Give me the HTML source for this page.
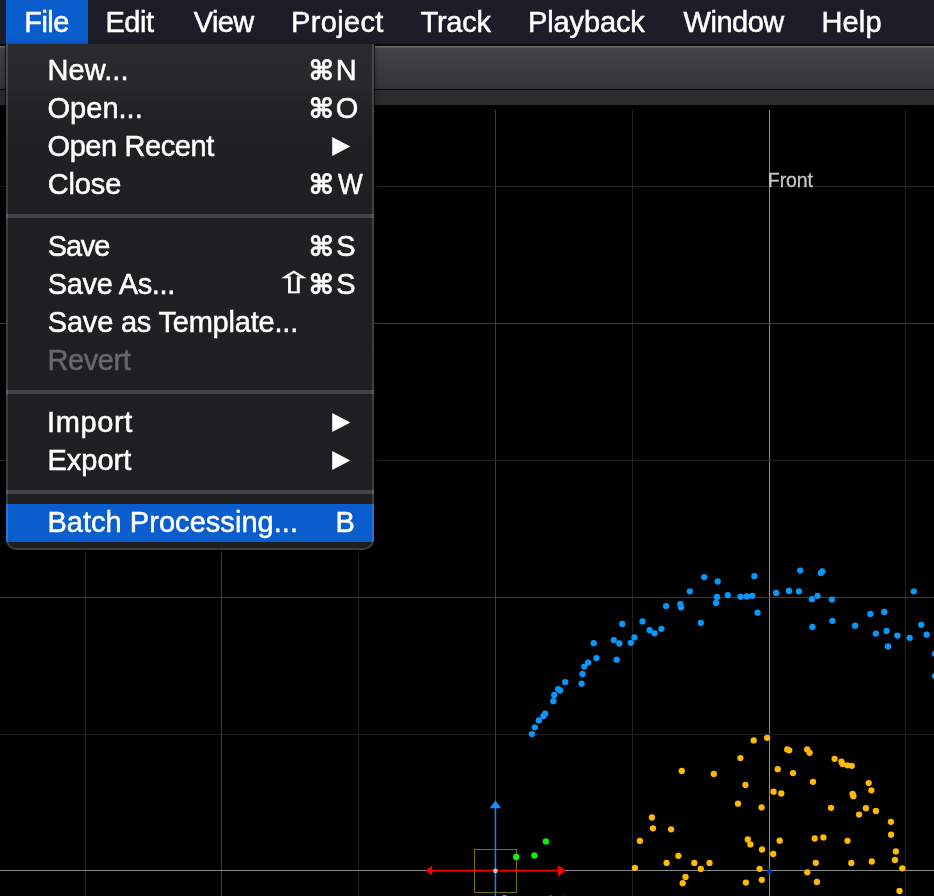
<!DOCTYPE html>
<html lang="en"><head><meta charset="utf-8"><title>File menu</title>
<style>
html,body{margin:0;padding:0;background:#000;}
body{width:934px;height:896px;position:relative;overflow:hidden;font-family:"Liberation Sans",sans-serif;}
.abs{position:absolute;}
#menubar{left:0;top:0;width:934px;height:44px;background:#1b1e28;}
#filehl{left:6px;top:0;width:82px;height:44px;background:#0a5dcd;}
.mb{position:absolute;top:0px;line-height:44px;font-size:29px;color:#fff;white-space:nowrap;}
#tb0{left:0;top:44px;width:934px;height:2px;background:#0b0b0d;}
#tb1{left:0;top:46px;width:934px;height:43px;background:linear-gradient(#6c6c6e 0,#5a5a5c 1.5px,#444447 2.5px,#434346 8px,#343436 43px);}
#tb2{left:0;top:89px;width:934px;height:1px;background:#070707;}
#tb3{left:0;top:90px;width:934px;height:15px;background:#2c2c2e;}
#menu{left:6px;top:44px;width:368px;height:506px;border-radius:0 0 10px 10px;overflow:hidden;
 background:linear-gradient(#2b2b2e 0,#29292c 40px,#222224 70px,#1f2022 110px,#1e1f20 100%);box-shadow:0 1px 0 1px rgba(0,0,0,0.55),0 3px 8px 1px rgba(0,0,0,0.3);}
#menuborder{left:0;top:-2px;width:364px;height:504px;border:2px solid rgba(255,255,255,0.14);border-radius:0 0 10px 10px;}
.sep{position:absolute;left:0;width:368px;height:4px;background:#434447;}
.mb,.mi,.sc{-webkit-text-stroke:0.5px currentColor;}
.tl{position:absolute;left:0;top:0;width:100%;height:100%;will-change:transform;}
.mi{position:absolute;line-height:38px;font-size:29px;color:#fff;white-space:nowrap;}
.dis{color:#68686b;}
.sc{position:absolute;line-height:38px;font-size:29px;color:#fff;white-space:nowrap;}
.sym{font-family:"DejaVu Sans",sans-serif;font-weight:bold;transform-origin:50% 50%;}
#hl{left:0;top:460px;width:368px;height:38px;background:#0a5dcd;}
#front{left:769px;top:166px;font-size:19.5px;line-height:28px;color:#c8c8c8;white-space:nowrap;-webkit-text-stroke:0.3px #c8c8c8;}
</style></head><body>
<svg class="abs" style="left:0;top:0" width="934" height="896" viewBox="0 0 934 896" shape-rendering="auto"><rect x="85" y="110" width="1" height="786" fill="#212121"/><rect x="221" y="110" width="1" height="786" fill="#3c3c3c"/><rect x="358" y="110" width="1" height="786" fill="#212121"/><rect x="495" y="110" width="1" height="786" fill="#3c3c3c"/><rect x="632" y="110" width="1" height="786" fill="#212121"/><rect x="769" y="110" width="1" height="786" fill="#8a8a8a"/><rect x="905" y="110" width="1" height="786" fill="#212121"/><rect x="0" y="186" width="934" height="1" fill="#212121"/><rect x="0" y="323" width="934" height="1" fill="#3c3c3c"/><rect x="0" y="460" width="934" height="1" fill="#212121"/><rect x="0" y="597" width="934" height="1" fill="#3c3c3c"/><rect x="0" y="734" width="934" height="1" fill="#212121"/><rect x="0" y="870" width="934" height="1" fill="#8a8a8a"/><rect x="474.5" y="849.5" width="42" height="43" fill="none" stroke="#7a6e00" stroke-width="1"/><rect x="494.7" y="806" width="1.5" height="90" fill="#1b84f5"/><polygon points="495.4,800.4 501.2,808.2 489.7,808.2" fill="#1b8cff"/><rect x="430" y="869.8" width="130" height="1.5" fill="#ff0000"/><polygon points="425.7,870.5 432.2,865.6 432.2,875.6" fill="#ff0000"/><polygon points="565.6,870.6 557.9,864.9 557.9,876.8" fill="#ff0000"/><circle cx="495.4" cy="870.9" r="2.3" fill="#d4cccc"/><circle cx="516.2" cy="856.9" r="3.2" fill="#0bf00b"/><circle cx="534.4" cy="855.5" r="3.2" fill="#0bf00b"/><circle cx="545.9" cy="841.4" r="3.2" fill="#0bf00b"/><circle cx="504.4" cy="898.2" r="3.2" fill="#0bf00b"/><circle cx="550.5" cy="898.6" r="3.2" fill="#0bf00b"/><circle cx="563.6" cy="899.0" r="3.2" fill="#0bf00b"/><circle cx="531.9" cy="734.1" r="3.15" fill="#0898fa"/><circle cx="534.8" cy="727.3" r="3.15" fill="#0898fa"/><circle cx="538.9" cy="720.4" r="3.15" fill="#0898fa"/><circle cx="543.4" cy="716.1" r="3.15" fill="#0898fa"/><circle cx="545.2" cy="713.6" r="3.15" fill="#0898fa"/><circle cx="553.3" cy="701.2" r="3.15" fill="#0898fa"/><circle cx="554.2" cy="695.0" r="3.15" fill="#0898fa"/><circle cx="558.2" cy="689.1" r="3.15" fill="#0898fa"/><circle cx="560.2" cy="690.5" r="3.15" fill="#0898fa"/><circle cx="565.2" cy="682.1" r="3.15" fill="#0898fa"/><circle cx="581.6" cy="683.7" r="3.15" fill="#0898fa"/><circle cx="582.5" cy="674.0" r="3.15" fill="#0898fa"/><circle cx="584.3" cy="666.6" r="3.15" fill="#0898fa"/><circle cx="588.1" cy="662.6" r="3.15" fill="#0898fa"/><circle cx="596.4" cy="658.1" r="3.15" fill="#0898fa"/><circle cx="593.7" cy="643.2" r="3.15" fill="#0898fa"/><circle cx="613.8" cy="640.1" r="3.15" fill="#0898fa"/><circle cx="619.4" cy="643.5" r="3.15" fill="#0898fa"/><circle cx="616.7" cy="659.7" r="3.15" fill="#0898fa"/><circle cx="622.3" cy="623.9" r="3.15" fill="#0898fa"/><circle cx="630.8" cy="642.8" r="3.15" fill="#0898fa"/><circle cx="634.4" cy="637.4" r="3.15" fill="#0898fa"/><circle cx="642.5" cy="621.4" r="3.15" fill="#0898fa"/><circle cx="649.7" cy="630.2" r="3.15" fill="#0898fa"/><circle cx="654.5" cy="633.3" r="3.15" fill="#0898fa"/><circle cx="661.4" cy="628.8" r="3.15" fill="#0898fa"/><circle cx="666.1" cy="606.1" r="3.15" fill="#0898fa"/><circle cx="680.3" cy="604.1" r="3.15" fill="#0898fa"/><circle cx="681.0" cy="607.3" r="3.15" fill="#0898fa"/><circle cx="689.8" cy="591.3" r="3.15" fill="#0898fa"/><circle cx="700.8" cy="622.8" r="3.15" fill="#0898fa"/><circle cx="704.2" cy="577.1" r="3.15" fill="#0898fa"/><circle cx="717.7" cy="581.5" r="3.15" fill="#0898fa"/><circle cx="716.9" cy="597.0" r="3.15" fill="#0898fa"/><circle cx="716.0" cy="603.0" r="3.15" fill="#0898fa"/><circle cx="727.8" cy="595.1" r="3.15" fill="#0898fa"/><circle cx="740.6" cy="596.7" r="3.15" fill="#0898fa"/><circle cx="746.9" cy="596.5" r="3.15" fill="#0898fa"/><circle cx="752.3" cy="595.8" r="3.15" fill="#0898fa"/><circle cx="754.4" cy="576.2" r="3.15" fill="#0898fa"/><circle cx="757.5" cy="612.7" r="3.15" fill="#0898fa"/><circle cx="776.2" cy="592.9" r="3.15" fill="#0898fa"/><circle cx="789.0" cy="590.9" r="3.15" fill="#0898fa"/><circle cx="798.9" cy="591.3" r="3.15" fill="#0898fa"/><circle cx="800.2" cy="570.6" r="3.15" fill="#0898fa"/><circle cx="820.9" cy="573.1" r="3.15" fill="#0898fa"/><circle cx="822.3" cy="571.5" r="3.15" fill="#0898fa"/><circle cx="811.9" cy="599.2" r="3.15" fill="#0898fa"/><circle cx="817.5" cy="595.8" r="3.15" fill="#0898fa"/><circle cx="831.9" cy="599.6" r="3.15" fill="#0898fa"/><circle cx="832.4" cy="620.8" r="3.15" fill="#0898fa"/><circle cx="812.4" cy="627.0" r="3.15" fill="#0898fa"/><circle cx="855.1" cy="625.7" r="3.15" fill="#0898fa"/><circle cx="870.4" cy="614.0" r="3.15" fill="#0898fa"/><circle cx="884.3" cy="612.0" r="3.15" fill="#0898fa"/><circle cx="875.8" cy="633.6" r="3.15" fill="#0898fa"/><circle cx="886.6" cy="630.9" r="3.15" fill="#0898fa"/><circle cx="888.1" cy="646.4" r="3.15" fill="#0898fa"/><circle cx="897.4" cy="635.6" r="3.15" fill="#0898fa"/><circle cx="909.7" cy="637.8" r="3.15" fill="#0898fa"/><circle cx="913.8" cy="591.3" r="3.15" fill="#0898fa"/><circle cx="921.2" cy="624.8" r="3.15" fill="#0898fa"/><circle cx="926.6" cy="634.7" r="3.15" fill="#0898fa"/><circle cx="934.9" cy="653.8" r="3.15" fill="#0898fa"/><circle cx="934.9" cy="676.1" r="3.15" fill="#0898fa"/><circle cx="767.1" cy="737.8" r="3.15" fill="#fdb906"/><circle cx="753.7" cy="740.4" r="3.15" fill="#fdb906"/><circle cx="740.4" cy="758.1" r="3.15" fill="#fdb906"/><circle cx="787.2" cy="749.4" r="3.15" fill="#fdb906"/><circle cx="789.2" cy="750.3" r="3.15" fill="#fdb906"/><circle cx="807.2" cy="749.4" r="3.15" fill="#fdb906"/><circle cx="809.6" cy="752.8" r="3.15" fill="#fdb906"/><circle cx="777.7" cy="769.2" r="3.15" fill="#fdb906"/><circle cx="793.0" cy="773.1" r="3.15" fill="#fdb906"/><circle cx="681.8" cy="771.0" r="3.15" fill="#fdb906"/><circle cx="713.8" cy="774.0" r="3.15" fill="#fdb906"/><circle cx="745.5" cy="785.0" r="3.15" fill="#fdb906"/><circle cx="773.6" cy="791.7" r="3.15" fill="#fdb906"/><circle cx="781.3" cy="793.5" r="3.15" fill="#fdb906"/><circle cx="738.0" cy="803.7" r="3.15" fill="#fdb906"/><circle cx="761.6" cy="807.4" r="3.15" fill="#fdb906"/><circle cx="651.9" cy="817.5" r="3.15" fill="#fdb906"/><circle cx="653.0" cy="828.3" r="3.15" fill="#fdb906"/><circle cx="671.1" cy="829.3" r="3.15" fill="#fdb906"/><circle cx="639.9" cy="840.9" r="3.15" fill="#fdb906"/><circle cx="747.8" cy="839.5" r="3.15" fill="#fdb906"/><circle cx="750.4" cy="844.4" r="3.15" fill="#fdb906"/><circle cx="779.7" cy="840.7" r="3.15" fill="#fdb906"/><circle cx="762.0" cy="849.5" r="3.15" fill="#fdb906"/><circle cx="773.2" cy="854.0" r="3.15" fill="#fdb906"/><circle cx="678.4" cy="855.8" r="3.15" fill="#fdb906"/><circle cx="666.6" cy="862.9" r="3.15" fill="#fdb906"/><circle cx="694.3" cy="862.9" r="3.15" fill="#fdb906"/><circle cx="709.5" cy="862.9" r="3.15" fill="#fdb906"/><circle cx="634.9" cy="867.8" r="3.15" fill="#fdb906"/><circle cx="700.8" cy="869.0" r="3.15" fill="#fdb906"/><circle cx="759.6" cy="868.8" r="3.15" fill="#fdb906"/><circle cx="807.3" cy="872.3" r="3.15" fill="#fdb906"/><circle cx="685.5" cy="876.9" r="3.15" fill="#fdb906"/><circle cx="682.7" cy="883.2" r="3.15" fill="#fdb906"/><circle cx="745.9" cy="882.6" r="3.15" fill="#fdb906"/><circle cx="761.8" cy="879.8" r="3.15" fill="#fdb906"/><circle cx="834.6" cy="758.8" r="3.15" fill="#fdb906"/><circle cx="841.4" cy="761.7" r="3.15" fill="#fdb906"/><circle cx="842.5" cy="764.1" r="3.15" fill="#fdb906"/><circle cx="847.5" cy="765.3" r="3.15" fill="#fdb906"/><circle cx="851.8" cy="765.8" r="3.15" fill="#fdb906"/><circle cx="813.0" cy="781.8" r="3.15" fill="#fdb906"/><circle cx="868.7" cy="783.1" r="3.15" fill="#fdb906"/><circle cx="871.4" cy="790.3" r="3.15" fill="#fdb906"/><circle cx="852.6" cy="793.9" r="3.15" fill="#fdb906"/><circle cx="853.4" cy="796.2" r="3.15" fill="#fdb906"/><circle cx="831.0" cy="807.8" r="3.15" fill="#fdb906"/><circle cx="865.9" cy="808.2" r="3.15" fill="#fdb906"/><circle cx="875.9" cy="811.0" r="3.15" fill="#fdb906"/><circle cx="859.1" cy="814.6" r="3.15" fill="#fdb906"/><circle cx="890.9" cy="821.8" r="3.15" fill="#fdb906"/><circle cx="891.1" cy="834.7" r="3.15" fill="#fdb906"/><circle cx="814.7" cy="838.5" r="3.15" fill="#fdb906"/><circle cx="823.4" cy="837.4" r="3.15" fill="#fdb906"/><circle cx="847.5" cy="840.8" r="3.15" fill="#fdb906"/><circle cx="895.9" cy="851.4" r="3.15" fill="#fdb906"/><circle cx="894.9" cy="860.0" r="3.15" fill="#fdb906"/><circle cx="815.8" cy="862.8" r="3.15" fill="#fdb906"/><circle cx="851.3" cy="863.0" r="3.15" fill="#fdb906"/><circle cx="871.8" cy="861.5" r="3.15" fill="#fdb906"/><circle cx="902.3" cy="868.3" r="3.15" fill="#fdb906"/><circle cx="816.9" cy="882.0" r="3.15" fill="#fdb906"/><circle cx="899.5" cy="890.9" r="3.15" fill="#fdb906"/><rect x="767" y="869" width="4" height="4" fill="#0034cc"/></svg>
<div class="tl"><div id="front" class="abs" style="left:767.84px;letter-spacing:-0.08px">Front</div></div>
<div id="tb0" class="abs"></div><div id="tb1" class="abs"></div><div id="tb2" class="abs"></div><div id="tb3" class="abs"></div>
<div id="menubar" class="abs"><div id="filehl" class="abs"></div><div class="tl">
<span class="mb" id="mb_File" style="left:24.21px;letter-spacing:-0.51px">File</span><span class="mb" id="mb_Edit" style="left:105.42px;letter-spacing:-0.46px">Edit</span><span class="mb" id="mb_View" style="left:193.77px;letter-spacing:-0.65px">View</span><span class="mb" id="mb_Project" style="left:291.07px;letter-spacing:0.34px">Project</span><span class="mb" id="mb_Track" style="left:420.58px;letter-spacing:-0.26px">Track</span><span class="mb" id="mb_Playback" style="left:528.07px;letter-spacing:-0.14px">Playback</span><span class="mb" id="mb_Window" style="left:683.54px;letter-spacing:-0.48px">Window</span><span class="mb" id="mb_Help" style="left:821.53px;letter-spacing:0.13px">Help</span></div></div>
<div id="menu" class="abs"><div id="hl" class="abs"></div><div class="sep" style="top:170px"></div><div class="sep" style="top:346px"></div><div class="sep" style="top:446px"></div><div class="tl"><span class="mi" id="mi_0" style="left:41.42px;top:7px;letter-spacing:0.12px">New...</span><span class="sc sym" id="sy_0_0" style="font-weight:bold;left:302.85px;top:8.1px;font-size:27.26px;transform:scaleY(1)">⌘</span><span class="sc" id="sl_0" style="left:329.71px;top:7px">N</span><span class="mi" id="mi_1" style="left:41.52px;top:45px;letter-spacing:0.02px">Open...</span><span class="sc sym" id="sy_1_0" style="font-weight:bold;left:302.85px;top:46.1px;font-size:27.26px;transform:scaleY(1)">⌘</span><span class="sc" id="sl_1" style="left:329.75px;top:45px">O</span><span class="mi" id="mi_2" style="left:41.52px;top:83px;letter-spacing:-0.42px">Open Recent</span><svg class="abs" style="left:325.8px;top:93.0px" width="19" height="19" viewBox="0 0 19 19"><polygon points="0.2,0 18.3,9.5 0.2,19" fill="#fff"/></svg><span class="mi" id="mi_3" style="left:41.69px;top:121px;letter-spacing:-0.11px">Close</span><span class="sc sym" id="sy_3_0" style="font-weight:bold;left:302.85px;top:122.09px;font-size:27.26px;transform:scaleY(1)">⌘</span><span class="sc" id="sl_3" style="left:331.74px;top:121px;transform-origin:0 50%;transform:scaleX(0.905)">W</span><span class="mi" id="mi_4" style="left:41.82px;top:183px;letter-spacing:-1.21px">Save</span><span class="sc sym" id="sy_4_0" style="font-weight:bold;left:302.85px;top:183.99px;font-size:27.26px;transform:scaleY(1)">⌘</span><span class="sc" id="sl_4" style="left:330.14px;top:183px">S</span><span class="mi" id="mi_5" style="left:41.82px;top:221px;letter-spacing:-0.34px">Save As...</span><span class="sc sym" id="sy_5_0" style="font-weight:normal;left:267.69px;top:220.48px;font-size:47.68px;transform:scaleY(0.62)">⇧</span><span class="sc sym" id="sy_5_1" style="font-weight:bold;left:302.85px;top:221.97px;font-size:27.26px;transform:scaleY(1)">⌘</span><span class="sc" id="sl_5" style="left:330.14px;top:221px">S</span><span class="mi" id="mi_6" style="left:41.82px;top:259px;letter-spacing:-0.21px">Save as Template...</span><span class="mi dis" id="mi_7" style="left:41.42px;top:297px;letter-spacing:-0.4px">Revert</span><span class="mi" id="mi_8" style="left:40.96px;top:359px;letter-spacing:0.62px">Import</span><svg class="abs" style="left:325.8px;top:369.0px" width="19" height="19" viewBox="0 0 19 19"><polygon points="0.2,0 18.3,9.5 0.2,19" fill="#fff"/></svg><span class="mi" id="mi_9" style="left:41.42px;top:397px;letter-spacing:0.01px">Export</span><svg class="abs" style="left:325.8px;top:407.0px" width="19" height="19" viewBox="0 0 19 19"><polygon points="0.2,0 18.3,9.5 0.2,19" fill="#fff"/></svg><span class="mi" id="mi_10" style="left:41.42px;top:459px;letter-spacing:0.04px">Batch Processing...</span><span class="sc" id="sl_10" style="left:329.5px;top:459px">B</span></div><div id="menuborder" class="abs"></div></div>
</body></html>
